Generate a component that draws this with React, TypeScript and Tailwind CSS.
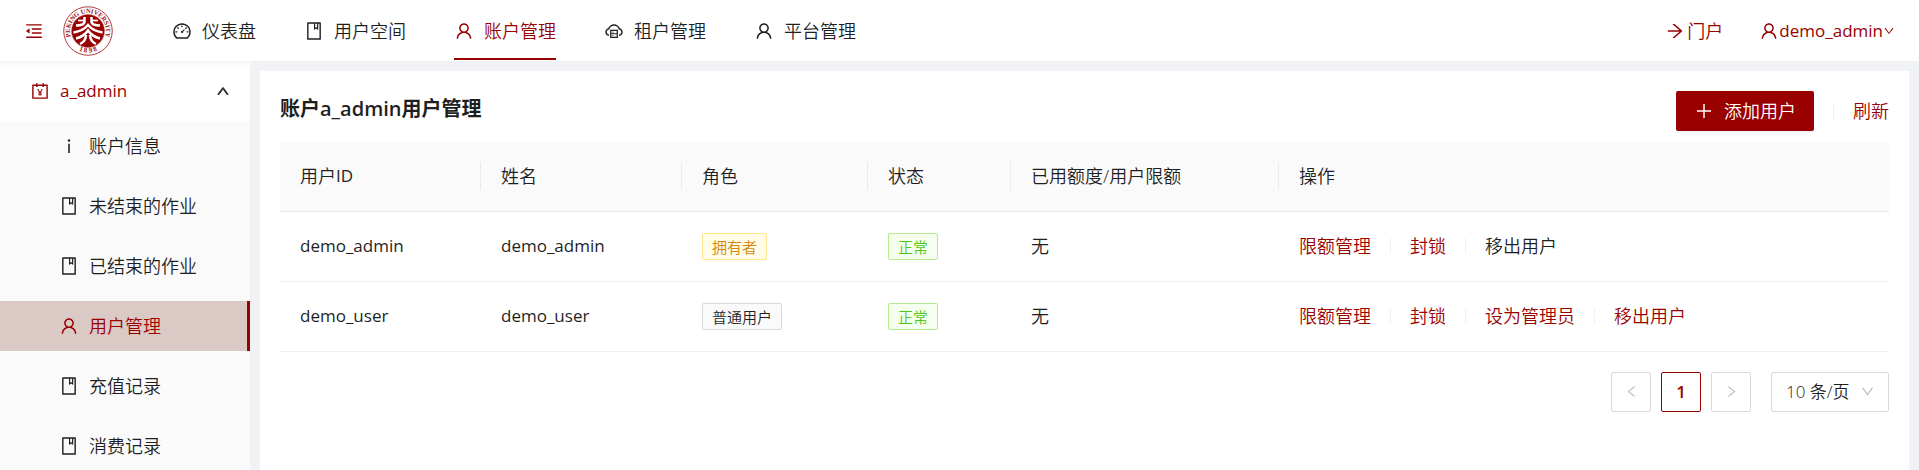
import type { ReactNode } from "react";
import type { IconType } from "react-icons";
import {
  AiOutlineAccountBook,
  AiOutlineArrowRight,
  AiOutlineBook,
  AiOutlineCloudServer,
  AiOutlineDashboard,
  AiOutlineDown,
  AiOutlineInfo,
  AiOutlineLeft,
  AiOutlineMenuFold,
  AiOutlinePlus,
  AiOutlineRight,
  AiOutlineUp,
  AiOutlineUser,
} from "react-icons/ai";

type Item = { label: string; icon: IconType; active?: boolean };

const navItems: Item[] = [
  { label: "仪表盘", icon: AiOutlineDashboard },
  { label: "用户空间", icon: AiOutlineBook },
  { label: "账户管理", icon: AiOutlineUser, active: true },
  { label: "租户管理", icon: AiOutlineCloudServer },
  { label: "平台管理", icon: AiOutlineUser },
];

const sideItems: Item[] = [
  { label: "账户信息", icon: AiOutlineInfo },
  { label: "未结束的作业", icon: AiOutlineBook },
  { label: "已结束的作业", icon: AiOutlineBook },
  { label: "用户管理", icon: AiOutlineUser, active: true },
  { label: "充值记录", icon: AiOutlineBook },
  { label: "消费记录", icon: AiOutlineBook },
];

const tagStyles = {
  gold: "border-[#ffe58f] bg-[#fffbe6] text-[#d48806]",
  green: "border-[#b7eb8f] bg-[#f6ffed] text-[#52c41a]",
  plain: "border-[#d9d9d9] bg-[#fafafa] text-[#1f1f1f]",
};

type Tone = keyof typeof tagStyles;

const users: {
  id: string;
  name: string;
  role: string;
  tone: Tone;
  actions: { label: string; disabled?: boolean }[];
}[] = [
  {
    id: "demo_admin",
    name: "demo_admin",
    role: "拥有者",
    tone: "gold",
    actions: [{ label: "限额管理" }, { label: "封锁" }, { label: "移出用户", disabled: true }],
  },
  {
    id: "demo_user",
    name: "demo_user",
    role: "普通用户",
    tone: "plain",
    actions: [{ label: "限额管理" }, { label: "封锁" }, { label: "设为管理员" }, { label: "移出用户" }],
  },
];

const columns: { key: string; title: ReactNode; width: string }[] = [
  {
    key: "id",
    title: (
      <>
        用户<span className="text-[17px] font-medium">ID</span>
      </>
    ),
    width: "w-[201px]",
  },
  { key: "name", title: "姓名", width: "w-[201px]" },
  { key: "role", title: "角色", width: "w-[186px]" },
  { key: "status", title: "状态", width: "w-[143px]" },
  { key: "quota", title: "已用额度/用户限额", width: "w-[268px]" },
  { key: "actions", title: "操作", width: "" },
];

function Logo() {
  return (
    <svg viewBox="0 0 100 100" className="size-[50px]" role="img" aria-label="Peking University">
      <defs>
        <path id="ring-top" d="M 21.5 72 A 36 36 0 1 1 78.500 72" />
        <path id="ring-bottom" d="M 20 81 A 43 43 0 0 0 80 81" />
      </defs>
      <circle cx="50" cy="50" r="48.500" fill="#fff" stroke="#b03a3a" strokeWidth="2" />
      <circle cx="50" cy="50" r="33" fill="#990000" stroke="#c97070" strokeWidth="1" />
      <text fill="#a01010" fontSize="13" fontWeight="700" fontFamily="Liberation Serif, serif">
        <textPath href="#ring-top" startOffset="50%" textAnchor="middle">
          PEKING UNIVERSITY
        </textPath>
      </text>
      <text fill="#a01010" fontSize="14" fontWeight="700" fontFamily="Liberation Serif, serif">
        <textPath href="#ring-bottom" startOffset="50%" textAnchor="middle">
          1 8 9 8
        </textPath>
      </text>
      <g fill="none" stroke="#fff" strokeWidth="5">
        <path d="M43 22 V32 Q42 39 26 39" />
        <path d="M57 22 V32 Q58 39 74 39" />
        <path d="M30 29 H43" strokeWidth="3.500" />
        <path d="M57 29 H70" strokeWidth="3.500" />
        <path d="M21 53 Q40 50 50 38 Q60 50 79 53" />
        <path d="M26 65 Q42 61 50 49 Q58 61 74 65" />
        <path d="M34 76 Q46 70 46 58" />
        <path d="M66 76 Q54 70 54 58" />
      </g>
    </svg>
  );
}

function Tag({ tone, children }: { tone: Tone; children: ReactNode }) {
  return (
    <span className={`inline-flex h-[27px] items-center rounded-[2px] border px-[9px] text-[15px] ${tagStyles[tone]}`}>
      {children}
    </span>
  );
}

function Header() {
  return (
    <header className="flex h-[61px] shrink-0 items-center bg-white px-6">
      <button type="button" aria-label="收起菜单" className="text-[#990000]">
        <AiOutlineMenuFold className="size-5" />
      </button>
      <a href="#home" className="ml-[19px]">
        <Logo />
      </a>
      <nav className="ml-[35px] flex h-full">
        {navItems.map(({ label, icon: Icon, active }) => (
          <a key={label} href="#nav" className={`h-full px-6 ${active ? "text-[#990000]" : ""}`}>
            <span
              className={`flex h-[60px] items-center gap-[10px] border-b-2 pt-1 ${
                active ? "border-[#990000]" : "border-transparent"
              }`}
            >
              <Icon className="size-5" />
              {label}
            </span>
          </a>
        ))}
      </nav>
      <div className="ml-auto flex items-center gap-9 text-[#990000]">
        <a href="#portal" className="flex items-center gap-[2px]">
          <AiOutlineArrowRight className="size-5" />
          门户
        </a>
        <button type="button" className="flex items-center text-[17px] font-normal">
          <AiOutlineUser className="size-5" />
          demo_admin
          <AiOutlineDown className="size-3" />
        </button>
      </div>
    </header>
  );
}

function Sidebar() {
  return (
    <aside className="w-[250px] shrink-0 overflow-hidden bg-[#fafafa]">
      <button
        type="button"
        className="flex h-[60px] w-full items-center gap-[10px] bg-white pr-5 pl-[30px] text-[17px] font-normal text-[#990000] shadow-[inset_0_8px_8px_-6px_rgba(0,0,0,0.05)]"
      >
        <AiOutlineAccountBook className="size-5" />
        a_admin
        <AiOutlineUp className="ml-auto size-[14px] stroke-[60] text-[#262626]" />
      </button>
      <ul className="flex flex-col gap-[10px]">
        {sideItems.map(({ label, icon: Icon, active }) => (
          <li key={label}>
            <a
              href="#side"
              className={`flex h-[50px] items-center gap-[10px] border-r-[3px] pl-[59px] ${
                active ? "border-[#990000] bg-[#dbc9c5] text-[#990000]" : "border-transparent"
              }`}
            >
              <Icon className="size-5" />
              {label}
            </a>
          </li>
        ))}
      </ul>
    </aside>
  );
}

function UserTable() {
  return (
    <table className="mt-[11px] w-full table-fixed border-collapse text-left">
      <thead>
        <tr className="h-[69px] border-b border-[#ebebeb] bg-[#fafafa]">
          {columns.map(({ key, title, width }, i) => (
            <th key={key} className={`p-0 font-[350] ${width}`}>
              <div
                className={`flex h-7 items-center pl-5 ${
                  i < columns.length - 1 ? "border-r border-[#ebebeb]" : ""
                }`}
              >
                {title}
              </div>
            </th>
          ))}
        </tr>
      </thead>
      <tbody>
        {users.map((user) => (
          <tr key={user.id} className="h-[70px] border-b border-[#f0f0f0]">
            <td className="pl-5 text-[17px] font-normal">{user.id}</td>
            <td className="pl-5 text-[17px] font-normal">{user.name}</td>
            <td className="pl-5">
              <Tag tone={user.tone}>{user.role}</Tag>
            </td>
            <td className="pl-5">
              <Tag tone="green">正常</Tag>
            </td>
            <td className="pl-5">无</td>
            <td className="pl-5">
              <div className="flex items-center">
                {user.actions.map(({ label, disabled }, i) => (
                  <div key={label} className="flex items-center">
                    {i > 0 && <span className="mx-[19px] h-4 w-px bg-[#f0f0f0]" />}
                    <button type="button" disabled={disabled} className={disabled ? "" : "text-[#990000]"}>
                      {label}
                    </button>
                  </div>
                ))}
              </div>
            </td>
          </tr>
        ))}
      </tbody>
    </table>
  );
}

function Pagination() {
  return (
    <div className="mt-5 flex justify-end gap-[10px]">
      <button
        type="button"
        aria-label="上一页"
        className="flex size-10 items-center justify-center rounded-[2px] border border-[#d9d9d9] text-[#bfbfbf]"
      >
        <AiOutlineLeft className="size-[15px]" />
      </button>
      <button
        type="button"
        aria-current="page"
        className="size-10 rounded-[2px] border border-[#990000] text-[17px] font-semibold text-[#990000]"
      >
        1
      </button>
      <button
        type="button"
        aria-label="下一页"
        className="flex size-10 items-center justify-center rounded-[2px] border border-[#d9d9d9] text-[#bfbfbf]"
      >
        <AiOutlineRight className="size-[15px]" />
      </button>
      <div className="relative ml-[10px]">
        <select
          aria-label="每页条数"
          className="h-10 w-[118px] appearance-none rounded-[2px] border border-[#d9d9d9] bg-white pl-[14px] text-[17px]"
        >
          <option>10 条/页</option>
          <option>20 条/页</option>
          <option>50 条/页</option>
        </select>
        <AiOutlineDown className="pointer-events-none absolute top-3 right-[14px] size-[15px] text-[#bfbfbf]" />
      </div>
    </div>
  );
}

export default function App() {
  return (
    <div className="flex h-screen flex-col bg-[#f0f2f5] font-['Open_Sans','Noto_Sans_CJK_SC',sans-serif] text-[18px] leading-7 font-[350] text-[#1f1f1f]">
      <Header />
      <div className="flex min-h-0 flex-1">
        <Sidebar />
        <main className="flex min-w-0 flex-1 flex-col overflow-auto px-[10px] pt-[10px]">
          <section className="flex-1 bg-white p-5">
            <div className="flex h-10 items-center justify-between">
              <h1 className="pb-[5px] text-[20px] font-semibold">账户a_admin用户管理</h1>
              <div className="flex items-center">
                <button
                  type="button"
                  className="flex h-10 items-center gap-[10px] rounded-[2px] bg-[#990000] px-[18px] text-white shadow-[0_2px_0_rgba(0,0,0,0.04)]"
                >
                  <AiOutlinePlus className="size-5" />
                  添加用户
                </button>
                <span className="mx-[19px] h-4 w-px bg-[#f0f0f0]" />
                <button type="button" className="text-[#990000]">
                  刷新
                </button>
              </div>
            </div>
            <UserTable />
            <Pagination />
          </section>
        </main>
      </div>
    </div>
  );
}
